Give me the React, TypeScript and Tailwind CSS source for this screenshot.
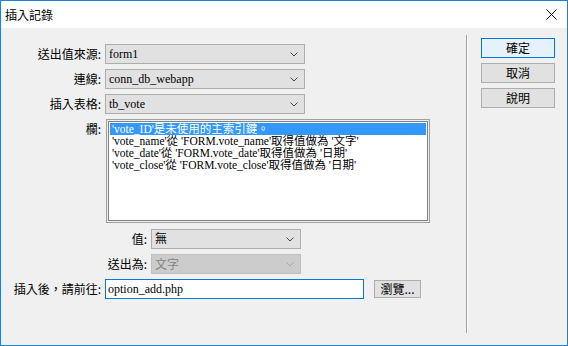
const ui = { fontFamily: '"Noto Sans CJK TC", "Noto Sans", sans-serif' }
const mingliu = { fontFamily: '"Liberation Serif", "Noto Sans CJK TC", serif' }

function Chevron({ color = '#555' }: { color?: string }) {
  return (
    <svg width="8" height="5" viewBox="0 0 8 5" className="shrink-0">
      <path d="M0.5 0.5 L4 4 L7.5 0.5" fill="none" stroke={color} strokeWidth="1" />
    </svg>
  )
}

function Select({ value, width, disabled }: { value: string; width: string; disabled?: boolean }) {
  return (
    <div
      className={`${width} h-[20px] flex items-center justify-between pl-[3px] pr-[6px] border text-[12px] leading-none ${
        disabled ? 'bg-[#cccccc] border-[#bfbfbf] text-[#838383]' : 'bg-[#e1e1e1] border-[#adadad] text-black'
      }`}
    >
      <span style={disabled ? ui : mingliu} className={disabled ? 'text-[12px]' : ''}>{value}</span>
      <Chevron color={disabled ? '#a8a8a8' : '#444'} />
    </div>
  )
}

function Label({ text, width }: { text: string; width: string }) {
  return (
    <div style={ui} className={`${width} shrink-0 text-right text-[12px] leading-none text-black`}>
      {text}
    </div>
  )
}

function Btn({ text, primary }: { text: string; primary?: boolean }) {
  return (
    <div
      style={ui}
      className={`w-[74px] h-[20px] flex items-center justify-center border text-[12px] leading-none text-black ${
        primary ? 'bg-[#e5f1fb] border-[#0078d7]' : 'bg-[#e1e1e1] border-[#adadad]'
      }`}
    >
      {text}
    </div>
  )
}

const rows = [
  "'vote_ID'是未使用的主索引鍵。",
  "'vote_name'從 'FORM.vote_name'取得值做為 '文字'",
  "'vote_date'從 'FORM.vote_date'取得值做為 '日期'",
  "'vote_close'從 'FORM.vote_close'取得值做為 '日期'",
]

export default function App() {
  return (
    <div className="w-[568px] h-[346px] border border-[#1883d7] bg-[#f0f0f0] flex flex-col overflow-hidden">
      {/* title bar */}
      <div className="h-[27px] bg-white flex items-center justify-between pl-[4px] pr-[10px] shrink-0">
        <span style={ui} className="text-[12px] text-black">插入記錄</span>
        <svg width="11" height="11" viewBox="0 0 11 11">
          <path d="M0.5 0.5 L10.5 10.5 M10.5 0.5 L0.5 10.5" stroke="#000" strokeWidth="1" />
        </svg>
      </div>

      <div className="flex-1 flex">
        {/* form */}
        <div className="w-[465px] shrink-0 pt-[16px] flex flex-col gap-[5px]">
          <div className="flex items-center gap-[4px]">
            <Label text="送出值來源:" width="w-[100px]" />
            <Select value="form1" width="w-[200px]" />
          </div>
          <div className="flex items-center gap-[4px]">
            <Label text="連線:" width="w-[100px]" />
            <Select value="conn_db_webapp" width="w-[200px]" />
          </div>
          <div className="flex items-center gap-[4px]">
            <Label text="插入表格:" width="w-[100px]" />
            <Select value="tb_vote" width="w-[200px]" />
          </div>
          <div className="flex items-start gap-[4px]">
            <div className="pt-[4px]">
              <Label text="欄:" width="w-[100px]" />
            </div>
            <div className="w-[324px] h-[104px] ml-[1px] border border-[#a0a0a0] p-px">
              <div className="w-full h-full border border-[#828282] bg-white pt-px px-px">
                {rows.map((r, i) => (
                  <div
                    key={i}
                    style={mingliu}
                    className={`h-[12px] overflow-hidden flex items-center text-[11.5px] leading-[12px] pl-[2px] whitespace-nowrap ${
                      i === 0 ? 'bg-[#3399ff] text-white' : 'text-black'
                    }`}
                  >
                    <span className="leading-[12px]">{r}</span>
                  </div>
                ))}
              </div>
            </div>
          </div>
          <div className="flex items-center gap-[4px] mt-[1px]">
            <Label text="值:" width="w-[146px]" />
            <Select value="無" width="w-[150px]" />
          </div>
          <div className="flex items-center gap-[4px]">
            <Label text="送出為:" width="w-[146px]" />
            <Select value="文字" width="w-[150px]" disabled />
          </div>
          <div className="flex items-center gap-[4px]">
            <Label text="插入後，請前往:" width="w-[100px]" />
            <div className="w-[259px] h-[20px] border border-[#0078d7] bg-white flex items-center pl-[2px]">
              <span style={mingliu} className="text-[12px] leading-none text-black">option_add.php</span>
            </div>
            <div
              style={ui}
              className="ml-[6px] w-[47px] h-[18px] flex items-center justify-center border border-[#adadad] bg-[#e1e1e1] text-[12px] leading-none text-black"
            >
              瀏覽...
            </div>
          </div>
        </div>

        {/* separator */}
        <div className="mt-[7px] mb-[12px] w-[2px] border-l border-[#a0a0a0] bg-white" />

        {/* buttons */}
        <div className="pl-[13px] pt-[10px] flex flex-col gap-[5px]">
          <Btn text="確定" primary />
          <Btn text="取消" />
          <Btn text="說明" />
        </div>
      </div>
    </div>
  )
}
